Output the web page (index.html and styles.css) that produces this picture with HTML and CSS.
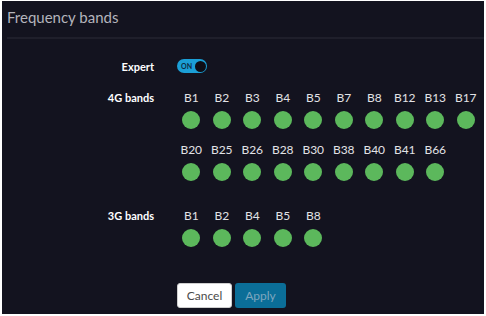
FILE: index.html
```html
<!DOCTYPE html>
<html lang="en">
<head>
  <meta charset="UTF-8" />
  <title>Frequency bands</title>
  <link rel="stylesheet" href="styles.css">
</head>
<body>
  <div class="dialog">
    <header>
      <h2>Frequency bands</h2>
    </header>

    <form class="bands-form">
      <div class="row">
        <label>Expert</label>
        <div class="toggle on"><span>ON</span><i></i></div>
      </div>

      <div class="row bands-row">
        <label>4G bands</label>
        <div class="bands">
          <div class="band"><span>B1</span><i></i></div>
          <div class="band"><span>B2</span><i></i></div>
          <div class="band"><span>B3</span><i></i></div>
          <div class="band"><span>B4</span><i></i></div>
          <div class="band"><span>B5</span><i></i></div>
          <div class="band"><span>B7</span><i></i></div>
          <div class="band"><span>B8</span><i></i></div>
          <div class="band"><span>B12</span><i></i></div>
          <div class="band"><span>B13</span><i></i></div>
          <div class="band"><span>B17</span><i></i></div>
          <div class="band"><span>B20</span><i></i></div>
          <div class="band"><span>B25</span><i></i></div>
          <div class="band"><span>B26</span><i></i></div>
          <div class="band"><span>B28</span><i></i></div>
          <div class="band"><span>B30</span><i></i></div>
          <div class="band"><span>B38</span><i></i></div>
          <div class="band"><span>B40</span><i></i></div>
          <div class="band"><span>B41</span><i></i></div>
          <div class="band"><span>B66</span><i></i></div>
        </div>
      </div>

      <div class="row bands-row three-g">
        <label>3G bands</label>
        <div class="bands">
          <div class="band"><span>B1</span><i></i></div>
          <div class="band"><span>B2</span><i></i></div>
          <div class="band"><span>B4</span><i></i></div>
          <div class="band"><span>B5</span><i></i></div>
          <div class="band"><span>B8</span><i></i></div>
        </div>
      </div>

      <div class="actions">
        <button type="button" class="btn cancel">Cancel</button>
        <button type="button" class="btn apply">Apply</button>
      </div>
    </form>
  </div>
</body>
</html>
```

FILE: styles.css
```css
body {
  margin: 0;
  background: #ffffff;
  font-family: Lato, "Open Sans", sans-serif;
}

.dialog {
  margin: 1px 2px 0;
  width: 482px;
  height: 313px;
  background: #13131f;
  color: #e6e6ea;
  overflow: hidden;
}

header {
  margin-left: 5px;
  height: 36px;
  border-bottom: 2px solid #1f1f2b;
}

h2 {
  margin: 0;
  padding-top: 7px;
  font-size: 15px;
  font-weight: normal;
  line-height: 18px;
  color: #b4b4bc;
}

.bands-form {
  padding-top: 20px;
}

.row {
  display: grid;
  grid-template-columns: 152px 1fr;
  column-gap: 22px;
  align-items: center;
}

.row label {
  text-align: right;
  font-size: 11px;
  font-weight: bold;
  color: #ffffff;
}

.bands-row {
  align-items: start;
  margin-top: 18px;
}

.bands-row label {
  line-height: 14px;
}

.three-g {
  margin-top: 28px;
}

.toggle {
  width: 30px;
  height: 14px;
  border-radius: 7px;
  background: #1b9fd6;
  display: flex;
  align-items: center;
  justify-content: space-between;
  padding: 0 1px 0 4px;
  box-sizing: border-box;
  margin-left: 1px;
}

.toggle span {
  font-size: 7px;
  font-weight: bold;
  color: #0d2b44;
}

.toggle i {
  width: 11px;
  height: 11px;
  border-radius: 50%;
  background: #0e0e16;
}

.bands {
  display: flex;
  flex-wrap: wrap;
  row-gap: 14px;
  width: 306px;
}

.band {
  width: 30.5px;
  display: flex;
  flex-direction: column;
  align-items: center;
}

.band span {
  font-size: 12px;
  line-height: 14px;
  color: #e2e2e6;
}

.band i {
  width: 18px;
  height: 18px;
  border-radius: 50%;
  background: #5cb85c;
  margin-top: 6px;
}

.actions {
  display: flex;
  gap: 3px;
  margin-top: 36px;
  padding-left: 175px;
}

.btn {
  height: 25px;
  border: none;
  border-radius: 3px;
  font-family: Lato, "Open Sans", sans-serif;
  font-size: 12px;
  padding: 0 8px;
}

.cancel {
  width: 55px;
  background: #ffffff;
  color: #4a4a4a;
  border: 1px solid #cfcfcf;
}

.apply {
  width: 51px;
  background: #0b6e98;
  color: #7ea6bf;
}
```
